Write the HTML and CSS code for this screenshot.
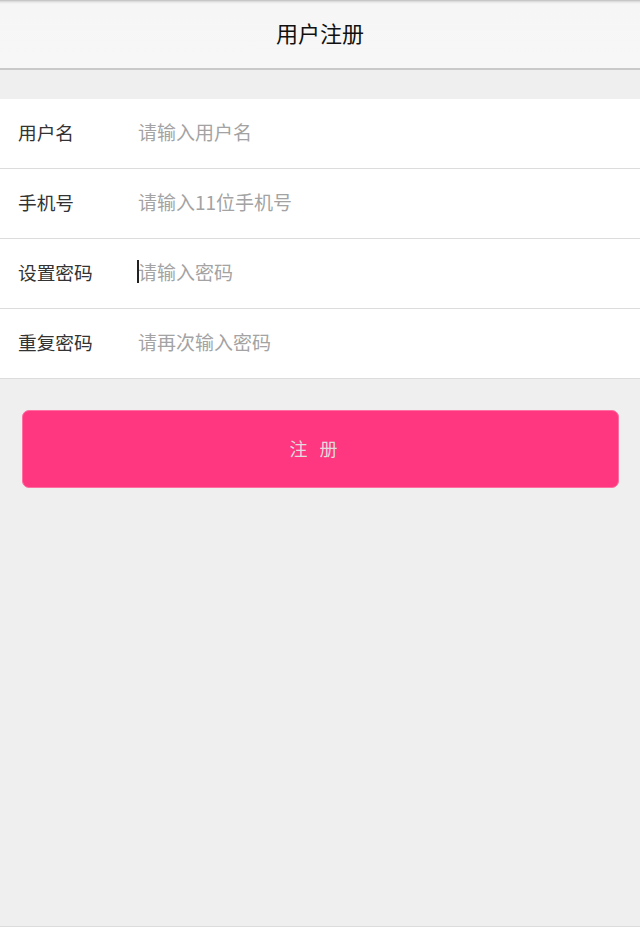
FILE: index.html
```html
<!DOCTYPE html>
<html lang="zh-CN">
<head>
<meta charset="utf-8">
<title>用户注册</title>
<link rel="stylesheet" href="styles.css">
</head>
<body>
<header class="topbar">
  <h1 class="title">用户注册</h1>
</header>
<main class="content">
  <form class="form">
    <div class="row">
      <label class="label">用户名</label>
      <input class="field" type="text" placeholder="请输入用户名">
    </div>
    <div class="row">
      <label class="label">手机号</label>
      <input class="field" type="text" placeholder="请输入11位手机号">
    </div>
    <div class="row">
      <label class="label">设置密码</label>
      <div class="field-wrap">
        <input class="field" type="password" placeholder="请输入密码">
        <span class="caret"></span>
      </div>
    </div>
    <div class="row">
      <label class="label">重复密码</label>
      <input class="field" type="password" placeholder="请再次输入密码">
    </div>
  </form>
  <div class="actions">
    <button class="submit" type="button">注 册</button>
  </div>
</main>
</body>
</html>
```
FILE: styles.css
```css
* { box-sizing: border-box; }
html, body {
  margin: 0;
  padding: 0;
  height: 100%;
}
body {
  background: #efefef;
  font-family: "Noto Sans CJK SC", "Noto Sans", sans-serif;
  display: flex;
  flex-direction: column;
  border-bottom: 1px solid #dcdcdc;
}
.topbar {
  height: 70px;
  background: linear-gradient(#bdbdbd 0, #e6e6e6 2px, #f6f6f6 4px, #f7f7f7 100%);
  border-bottom: 2px solid #c9c9c9;
  display: flex;
  align-items: center;
  justify-content: center;
}
.title {
  margin: 0;
  font-size: 22px;
  font-weight: normal;
  color: #111;
  line-height: 1;
  padding-bottom: 5px;
}
.content {
  padding-top: 29px;
  flex: 1;
}
.form {
  background: #fff;
}
.row {
  height: 70px;
  display: flex;
  align-items: center;
  border-bottom: 1px solid #dcdcdc;
  padding-left: 18px;
  padding-bottom: 5px;
}
.label {
  width: 120px;
  font-size: 18.7px;
  color: #333;
}
.field-wrap {
  position: relative;
  flex: 1;
  display: flex;
}
.field {
  flex: 1;
  border: none;
  outline: none;
  background: transparent;
  font-family: inherit;
  font-size: 19px;
  color: #333;
  padding: 0;
  height: 30px;
}
.field::placeholder {
  color: #a3a3a3;
}
.caret {
  position: absolute;
  left: -1px;
  top: 4px;
  width: 2px;
  height: 23px;
  background: #222;
}
.actions {
  padding: 31px 21px 0 22px;
}
.submit {
  width: 100%;
  height: 78px;
  background: #ff3781;
  border: 1px solid #ff6fa1;
  border-radius: 7px;
  color: #e3dadd;
  font-family: inherit;
  font-size: 18px;
  letter-spacing: 4px;
  padding: 0 10px 2px 0;
}
```
